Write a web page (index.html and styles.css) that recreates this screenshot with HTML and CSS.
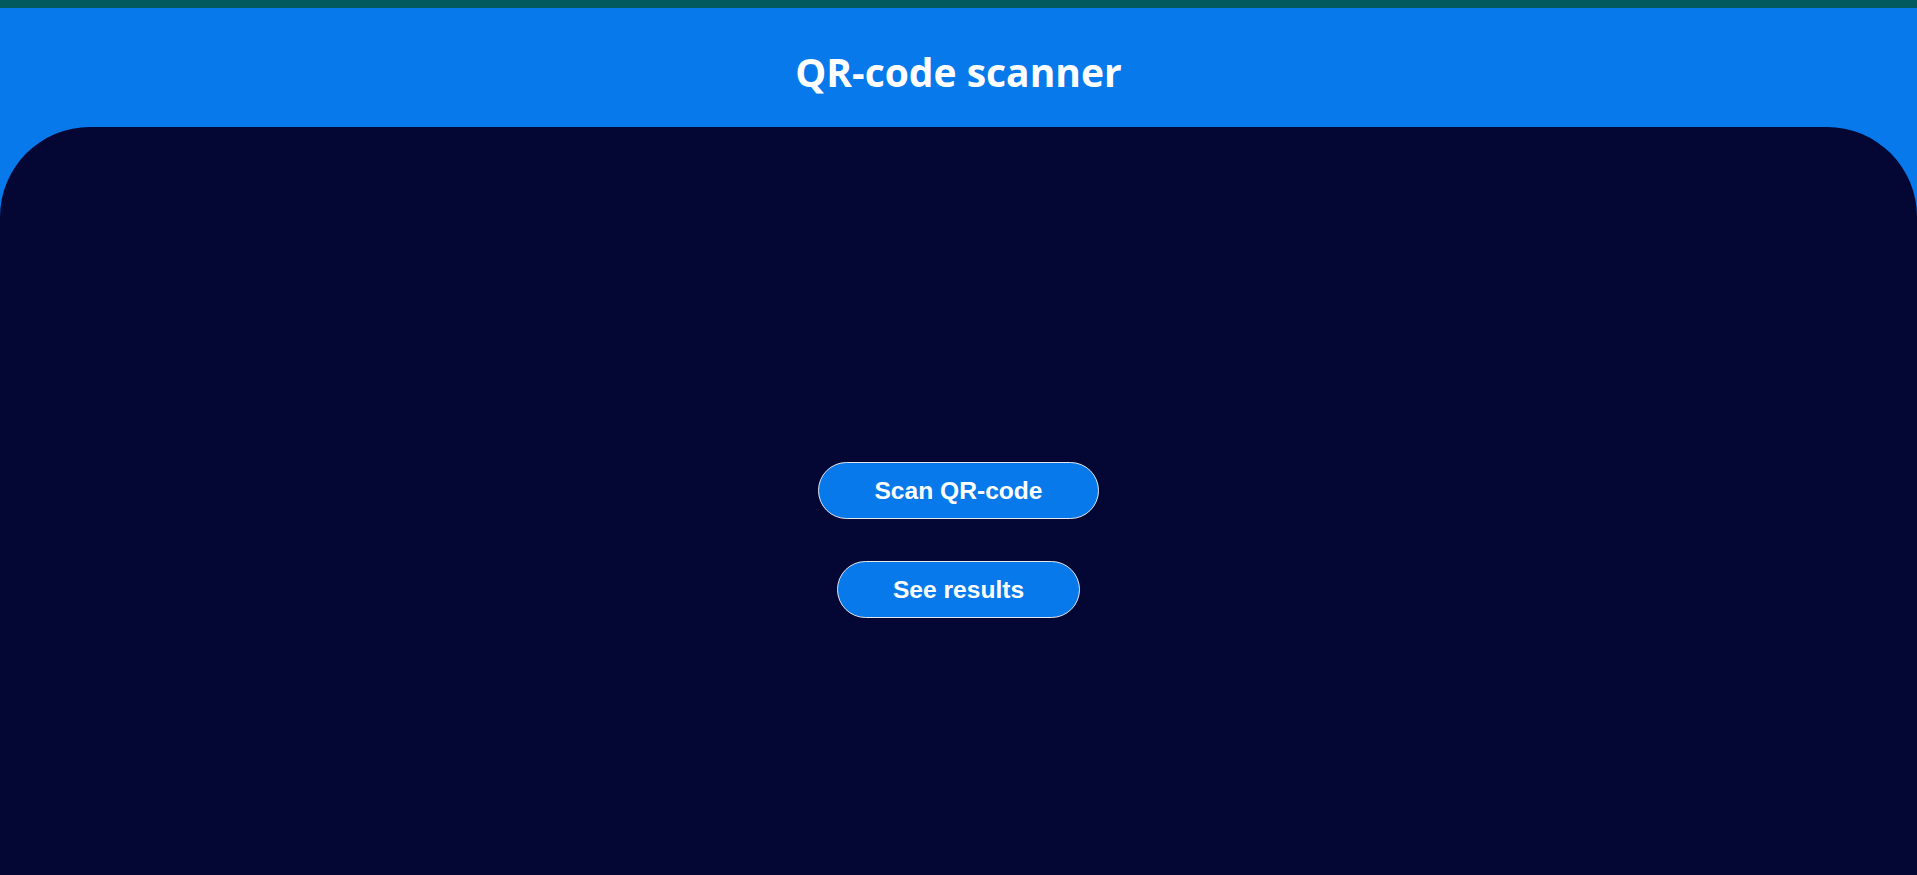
FILE: index.html
```html
<!DOCTYPE html>
<html lang="en">
<head>
<meta charset="utf-8">
<title>QR-code scanner</title>
<link rel="stylesheet" href="styles.css">
</head>
<body>
<div class="topbar"></div>
<header class="header">
  <h1 class="title">QR-code scanner</h1>
</header>
<main class="panel">
  <button class="btn" type="button">Scan QR-code</button>
  <button class="btn" type="button">See results</button>
</main>
</body>
</html>
```
FILE: styles.css
```css
html, body {
  margin: 0;
  padding: 0;
  height: 100%;
  overflow: hidden;
}
body {
  background: #0779ea;
  font-family: "Open Sans", "Liberation Sans", sans-serif;
  display: flex;
  flex-direction: column;
}
.topbar {
  height: 8px;
  background: #035a5e;
  flex: none;
}
.header {
  height: 119px;
  flex: none;
  display: flex;
  align-items: center;
  justify-content: center;
  background: #0779ea;
}
.title {
  margin: 0;
  padding-top: 8px;
  color: #ffffff;
  font-size: 39px;
  font-weight: 700;
  letter-spacing: 0;
}
.panel {
  flex: 1;
  background: #040633;
  border-radius: 90px 90px 0 0;
  display: flex;
  flex-direction: column;
  align-items: center;
  padding-top: 335px;
  gap: 42px;
}
.btn {
  height: 57px;
  padding: 0 55px;
  border: 1px solid #e6e6ee;
  border-radius: 30px;
  background: #0779ea;
  color: #ffffff;
  font-family: "Liberation Sans", Arial, sans-serif;
  font-weight: 700;
  font-size: 24.6px;
  cursor: pointer;
}
```
